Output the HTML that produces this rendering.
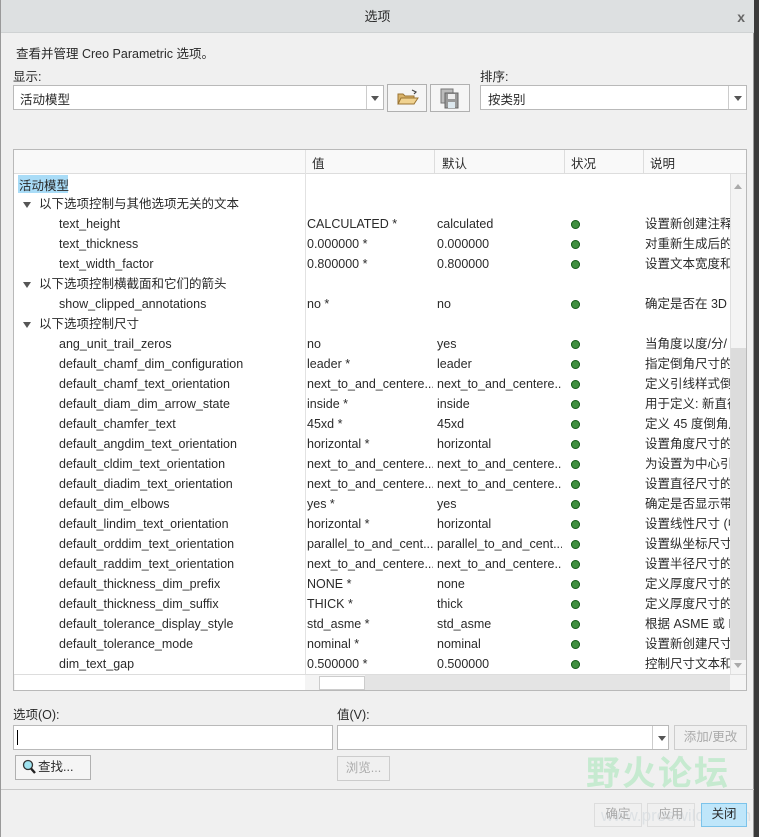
<!DOCTYPE html>
<html><head><meta charset="utf-8"><style>
*{margin:0;padding:0;box-sizing:border-box}
body{width:759px;height:837px;background:#3a3a3a;position:relative;overflow:hidden;font-family:"Liberation Sans","Noto Sans CJK SC",sans-serif;font-size:12.5px;color:#2a2a2a}
.dlg{position:absolute;left:0;top:0;width:754px;height:837px;background:#f0f0f0;border-left:1px solid #999;border-right:1px solid #999}
.title{position:absolute;left:0;top:0;width:753px;height:33px;background:#dde0e1;border-bottom:1px solid #cfd2d3;text-align:center;line-height:34px;font-size:13px}
.x{position:absolute;right:9px;top:0;font-weight:bold;color:#666;font-size:14px}
.a{position:absolute;white-space:nowrap}
.box{position:absolute;background:#fff;border:1px solid #b9b9b9}
.btn{position:absolute;background:#f5f5f5;border:1px solid #b0b0b0;text-align:center}
.arr{position:absolute;width:0;height:0;border-left:4px solid transparent;border-right:4px solid transparent;border-top:5px solid #555}
.tbl{position:absolute;left:12px;top:149px;width:734px;height:542px;background:#fff;border:1px solid #b9b9b9;overflow:hidden}
.row{position:absolute;left:0;height:20px;line-height:20px;width:720px}
.row span{position:absolute;white-space:nowrap;overflow:hidden}
.dot{position:absolute;left:557px;top:6px;width:9px;height:9px;border-radius:50%;background:#3f8f3f;box-shadow:inset 0 0 0 1px #1b5e20}
.tri{position:absolute;left:9px;top:8px;border-left:4px solid transparent;border-right:4px solid transparent;border-top:6px solid #555}
</style></head><body>
<div class="dlg">
<div class="title">选项<span class="x">x</span></div>
<div class="a" style="left:15px;top:43px">查看并管理 Creo Parametric 选项。</div>
<div class="a" style="left:12px;top:66px">显示:</div>
<div class="box" style="left:12px;top:85px;width:371px;height:25px"><span class="a" style="left:6px;top:3px">活动模型</span><div style="position:absolute;left:352px;top:0;width:1px;height:23px;background:#ccc"></div><div class="arr" style="left:357px;top:10px"></div></div>
<div class="btn" style="left:386px;top:84px;width:40px;height:28px">
<svg width="38" height="26" viewBox="0 0 38 26"><path d="M10 19 L10 9 L15 9 L17 11 L26 11 L26 19 Z" fill="#d9b36a" stroke="#9a7432"/><path d="M10 19 L13 13 L30 13 L26 19 Z" fill="#f0d290" stroke="#9a7432"/><path d="M24 5 L28 7 L26 9" fill="none" stroke="#444" stroke-width="1.2"/></svg></div>
<div class="btn" style="left:429px;top:84px;width:40px;height:28px">
<svg width="38" height="26" viewBox="0 0 38 26"><rect x="10" y="4" width="12" height="14" fill="#bbb" stroke="#777"/><rect x="14" y="8" width="13" height="15" fill="#999" stroke="#666"/><rect x="17" y="9" width="7" height="5" fill="#eee"/><rect x="17" y="17" width="7" height="6" fill="#dde8ee"/></svg></div>
<div class="a" style="left:479px;top:66px">排序:</div>
<div class="box" style="left:479px;top:85px;width:267px;height:25px"><span class="a" style="left:7px;top:3px">按类别</span><div style="position:absolute;left:247px;top:0;width:1px;height:23px;background:#ccc"></div><div class="arr" style="left:253px;top:10px"></div></div>

<div class="tbl">
<div style="position:absolute;left:0;top:0;width:734px;height:24px;background:#f9f9f9;border-bottom:1px solid #ddd"></div>
<div style="position:absolute;left:291px;top:0;width:1px;height:524px;background:#e2e2e2"></div>
<div style="position:absolute;left:420px;top:0;width:1px;height:24px;background:#ddd"></div>
<div style="position:absolute;left:550px;top:0;width:1px;height:24px;background:#ddd"></div>
<div style="position:absolute;left:629px;top:0;width:1px;height:24px;background:#ddd"></div>
<span class="a" style="left:298px;top:3px">值</span><span class="a" style="left:428px;top:3px">默认</span><span class="a" style="left:557px;top:3px">状况</span><span class="a" style="left:636px;top:3px">说明</span>
<div style="position:absolute;left:4px;top:25px;width:50px;height:18px;background:#a9dcf7"></div>
<span class="a" style="left:5px;top:25px">活动模型</span>
<div id="rows"></div>
<div style="position:absolute;left:716px;top:24px;width:17px;height:500px;background:#f4f4f4;border-left:1px solid #e0e0e0"></div>
<div style="position:absolute;left:717px;top:198px;width:15px;height:312px;background:#dcdcdc"></div>
<div class="arr" style="left:720px;top:34px;border-top:none;border-bottom:5px solid #aaa"></div>
<div class="arr" style="left:720px;top:513px;border-top:5px solid #aaa"></div>
<div style="position:absolute;left:0;top:524px;width:734px;height:17px;background:#f4f4f4;border-top:1px solid #ddd"></div>
<div style="position:absolute;left:1px;top:525px;width:290px;height:16px;background:#fff"></div>
<div style="position:absolute;left:305px;top:526px;width:46px;height:14px;background:#fff;border:1px solid #ccc"></div>
<div style="position:absolute;left:351px;top:525px;width:365px;height:16px;background:#e4e4e4"></div>
</div>

<div class="a" style="left:12px;top:704px">选项(O):</div>
<div class="a" style="left:336px;top:704px">值(V):</div>
<div class="box" style="left:12px;top:725px;width:320px;height:25px"><div style="position:absolute;left:3px;top:4px;width:1px;height:15px;background:#000"></div></div>
<div class="box" style="left:336px;top:725px;width:332px;height:25px"><div style="position:absolute;left:314px;top:0;width:1px;height:23px;background:#ccc"></div><div class="arr" style="left:320px;top:10px"></div></div>
<div class="btn" style="left:673px;top:725px;width:73px;height:25px;line-height:22px;color:#aaa;background:#f0f0f0;border-color:#ccc">添加/更改</div>
<div class="btn" style="left:14px;top:755px;width:76px;height:25px;line-height:22px;text-align:left;padding-left:22px">查找...
<svg style="position:absolute;left:6px;top:3px" width="16" height="17" viewBox="0 0 16 17"><circle cx="6" cy="6" r="4.5" fill="#9fe3f0" stroke="#333" stroke-width="1.3"/><path d="M9 9.5 L13 14" stroke="#222" stroke-width="2.4"/></svg></div>
<div class="btn" style="left:336px;top:756px;width:53px;height:25px;line-height:22px;color:#aaa;background:#f0f0f0;border-color:#ccc">浏览...</div>
<div style="position:absolute;left:0;top:789px;width:753px;height:1px;background:#c8c8c8"></div>
<div class="a" style="left:585px;top:746px;font-size:34px;color:#c6ead0;font-weight:bold;letter-spacing:2px">野火论坛</div>
<div class="a" style="left:600px;top:806px;font-size:17px;color:#dde1e4">www.proewildfire.cn</div>
<div class="btn" style="left:593px;top:803px;width:48px;height:24px;line-height:21px;color:#aaa;background:transparent;border-color:#ddd">确定</div>
<div class="btn" style="left:646px;top:803px;width:48px;height:24px;line-height:21px;color:#aaa;background:transparent;border-color:#ddd">应用</div>
<div class="btn" style="left:700px;top:803px;width:46px;height:24px;line-height:21px;background:#bfe6fa;border-color:#7cc3ea">关闭</div>
</div>
<script>
var d=[["g","以下选项控制与其他选项无关的文本"],["text_height","CALCULATED *","calculated","设置新创建注释"],["text_thickness","0.000000 *","0.000000","对重新生成后的"],["text_width_factor","0.800000 *","0.800000","设置文本宽度和"],["g","以下选项控制横截面和它们的箭头"],["show_clipped_annotations","no *","no","确定是否在 3D"],["g","以下选项控制尺寸"],["ang_unit_trail_zeros","no","yes","当角度以度/分/"],["default_chamf_dim_configuration","leader *","leader","指定倒角尺寸的"],["default_chamf_text_orientation","next_to_and_centere...","next_to_and_centere...","定义引线样式倒"],["default_diam_dim_arrow_state","inside *","inside","用于定义: 新直径"],["default_chamfer_text","45xd *","45xd","定义 45 度倒角尺"],["default_angdim_text_orientation","horizontal *","horizontal","设置角度尺寸的"],["default_cldim_text_orientation","next_to_and_centere...","next_to_and_centere...","为设置为中心引"],["default_diadim_text_orientation","next_to_and_centere...","next_to_and_centere...","设置直径尺寸的"],["default_dim_elbows","yes *","yes","确定是否显示带"],["default_lindim_text_orientation","horizontal *","horizontal","设置线性尺寸 (中"],["default_orddim_text_orientation","parallel_to_and_cent...","parallel_to_and_cent...","设置纵坐标尺寸"],["default_raddim_text_orientation","next_to_and_centere...","next_to_and_centere...","设置半径尺寸的"],["default_thickness_dim_prefix","NONE *","none","定义厚度尺寸的"],["default_thickness_dim_suffix","THICK *","thick","定义厚度尺寸的"],["default_tolerance_display_style","std_asme *","std_asme","根据 ASME 或 I"],["default_tolerance_mode","nominal *","nominal","设置新创建尺寸"],["dim_text_gap","0.500000 *","0.500000","控制尺寸文本和"]];
var h="";d.forEach(function(r,i){var t=44+i*20;if(r[0]=="g"){h+='<div class="row" style="top:'+t+'px"><div class="tri"></div><span style="left:25px">'+r[1]+'</span></div>';}else{h+='<div class="row" style="top:'+t+'px"><span style="left:45px">'+r[0]+'</span><span style="left:293px;width:126px">'+r[1]+'</span><span style="left:423px;width:125px">'+r[2]+'</span><div class="dot"></div><span style="left:631px;width:85px">'+r[3]+'</span></div>';}});
document.getElementById("rows").innerHTML=h;
</script>
</body></html>
